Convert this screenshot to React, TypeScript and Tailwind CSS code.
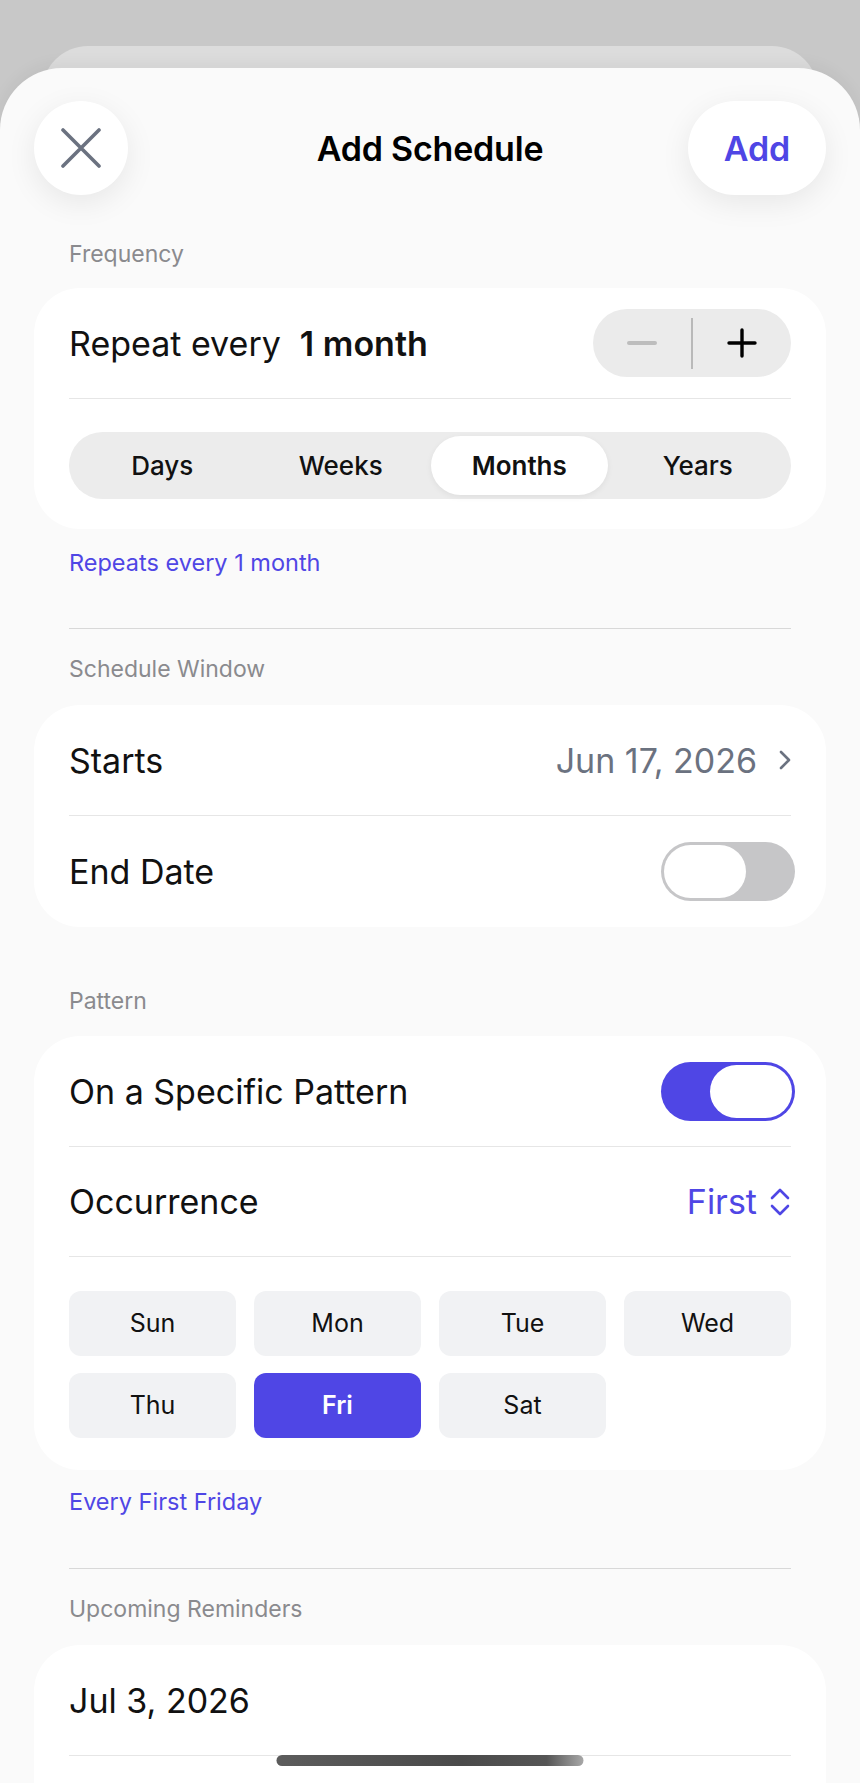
import React from "react";

const days = ["Sun", "Mon", "Tue", "Wed", "Thu", "Fri", "Sat"];
const units = ["Days", "Weeks", "Months", "Years"];

function Toggle({ on }: { on: boolean }) {
  return (
    <div
      className={
        on
          ? "flex h-[59px] w-[134px] justify-end rounded-full bg-[#4f46e5] p-[3px]"
          : "flex h-[59px] w-[134px] justify-start rounded-full bg-[#c6c6c8] p-[3px]"
      }
    >
      <div className="h-full w-[82px] rounded-full bg-white" />
    </div>
  );
}

function Divider() {
  return <div className="mx-[35px] h-px bg-[#e6e6e6]" />;
}

function Label({ children, className }: { children: React.ReactNode; className: string }) {
  return <div className={`px-[35px] text-[23px] leading-[28px] text-[#8a8a8e] ${className}`}>{children}</div>;
}

function Note({ children, className }: { children: React.ReactNode; className: string }) {
  return <div className={`px-[35px] text-[23.5px] leading-[28px] text-[#4f46e5] ${className}`}>{children}</div>;
}

export default function App() {
  return (
    <div className="relative h-[1783px] overflow-hidden bg-[#c8c8c8] pt-[46px] font-[Inter,sans-serif] text-[#111]">
      {/* sheet stack */}
      <div className="mx-[42px] h-[60px] rounded-t-[46px] bg-[#dcdcdc]" />
      <div className="relative -mt-[38px] h-[1715px] overflow-hidden rounded-t-[62px] bg-[#fafafa] px-[34px] shadow-[0_-4px_16px_rgba(0,0,0,0.05)]">
        {/* header */}
        <div className="mt-[33px] grid h-[94px] grid-cols-[138px_1fr_138px] items-center">
          <button className="flex h-[94px] w-[94px] items-center justify-center rounded-full bg-white shadow-[0_8px_30px_rgba(0,0,0,0.08)]">
            <svg width="40" height="40" viewBox="0 0 40 40" fill="none">
              <path d="M2 2 38 38M38 2 2 38" stroke="#6b7280" strokeWidth="3.6" strokeLinecap="round" />
            </svg>
          </button>
          <h1 className="text-center text-[34px] font-semibold tracking-[-0.2px] text-black">Add Schedule</h1>
          <button className="flex h-[94px] w-[138px] items-center justify-center rounded-full bg-white text-[34px] font-semibold text-[#4f46e5] shadow-[0_8px_30px_rgba(0,0,0,0.08)]">
            Add
          </button>
        </div>

        {/* frequency */}
        <Label className="mt-[45px]">Frequency</Label>
        <div className="mt-[20px] rounded-[46px] bg-white">
          <div className="flex h-[110px] items-center justify-between px-[35px]">
            <div className="text-[34px]">
              Repeat every<span className="ml-[19px] font-semibold">1 month</span>
            </div>
            <div className="flex h-[68px] w-[198px] items-center rounded-full bg-[#ebebeb]">
              <div className="flex flex-1 items-center justify-center">
                <div className="h-[4px] w-[30px] rounded-full bg-[#bdbdbd]" />
              </div>
              <div className="h-[51px] w-[2px] bg-[#b9b9b9]" />
              <div className="flex flex-1 items-center justify-center">
                <svg width="30" height="30" viewBox="0 0 30 30" fill="none">
                  <path d="M15 2v26M2 15h26" stroke="#000" strokeWidth="3.4" strokeLinecap="round" />
                </svg>
              </div>
            </div>
          </div>
          <Divider />
          <div className="px-[35px] pb-[30px] pt-[33px]">
            <div className="grid h-[67px] grid-cols-4 rounded-full bg-[#ececec] p-[4px]">
              {units.map((u) =>
                u === "Months" ? (
                  <div
                    key={u}
                    className="mx-[1px] flex items-center justify-center rounded-full bg-white text-[26px] font-semibold shadow-[0_2px_6px_rgba(0,0,0,0.06)]"
                  >
                    {u}
                  </div>
                ) : (
                  <div key={u} className="flex items-center justify-center text-[26px] font-medium">
                    {u}
                  </div>
                )
              )}
            </div>
          </div>
        </div>
        <Note className="mt-[20px]">Repeats every 1 month</Note>
        <div className="mx-[35px] mt-[51px] h-px bg-[#d8d8d8]" />

        {/* schedule window */}
        <Label className="mt-[26px]">Schedule Window</Label>
        <div className="mt-[22px] rounded-[46px] bg-white">
          <div className="flex h-[110px] items-center justify-between px-[35px]">
            <span className="text-[34px]">Starts</span>
            <div className="flex items-center gap-[22px]">
              <span className="text-[34px] text-[#6b7280]">Jun 17, 2026</span>
              <svg width="12" height="20" viewBox="0 0 12 20" fill="none">
                <path d="M2 2l8 8-8 8" stroke="#6b7280" strokeWidth="2.6" strokeLinecap="round" strokeLinejoin="round" />
              </svg>
            </div>
          </div>
          <Divider />
          <div className="flex h-[111px] items-center justify-between pl-[35px] pr-[31px]">
            <span className="text-[34px]">End Date</span>
            <Toggle on={false} />
          </div>
        </div>

        {/* pattern */}
        <Label className="mt-[60px]">Pattern</Label>
        <div className="mt-[21px] rounded-[46px] bg-white">
          <div className="flex h-[110px] items-center justify-between pl-[35px] pr-[31px]">
            <span className="text-[34px]">On a Specific Pattern</span>
            <Toggle on={true} />
          </div>
          <Divider />
          <div className="flex h-[109px] items-center justify-between px-[35px]">
            <span className="text-[34px]">Occurrence</span>
            <div className="flex items-center gap-[12px]">
              <span className="text-[34px] text-[#4f46e5]">First</span>
              <svg width="22" height="28" viewBox="0 0 22 28" fill="none">
                <path
                  d="M3 10l8-8 8 8M3 18l8 8 8-8"
                  stroke="#4f46e5"
                  strokeWidth="2.6"
                  strokeLinecap="round"
                  strokeLinejoin="round"
                />
              </svg>
            </div>
          </div>
          <Divider />
          <div className="grid grid-cols-4 gap-x-[18px] gap-y-[17px] px-[35px] pb-[32px] pt-[34px]">
            {days.map((d) =>
              d === "Fri" ? (
                <div
                  key={d}
                  className="flex h-[65px] items-center justify-center rounded-[12px] bg-[#4f46e5] text-[25px] font-semibold text-white"
                >
                  {d}
                </div>
              ) : (
                <div
                  key={d}
                  className="flex h-[65px] items-center justify-center rounded-[12px] bg-[#f1f2f4] text-[25px] font-normal"
                >
                  {d}
                </div>
              )
            )}
          </div>
        </div>
        <Note className="mt-[18px]">Every First Friday</Note>
        <div className="mx-[35px] mt-[52px] h-px bg-[#d8d8d8]" />

        {/* upcoming */}
        <Label className="mt-[26px]">Upcoming Reminders</Label>
        <div className="mt-[22px] rounded-t-[46px] bg-white">
          <div className="flex h-[110px] items-center px-[35px]">
            <span className="text-[34px]">Jul 3, 2026</span>
          </div>
          <Divider />
          <div className="h-[110px]" />
        </div>
      </div>

      {/* home indicator */}
      <div className="absolute bottom-[17px] left-1/2 h-[11px] w-[307px] -translate-x-1/2 rounded-full bg-[linear-gradient(90deg,#5c5c5c_0%,#4a4a4a_60%,#555_88%,#a8a8a8_100%)]" />
    </div>
  );
}
